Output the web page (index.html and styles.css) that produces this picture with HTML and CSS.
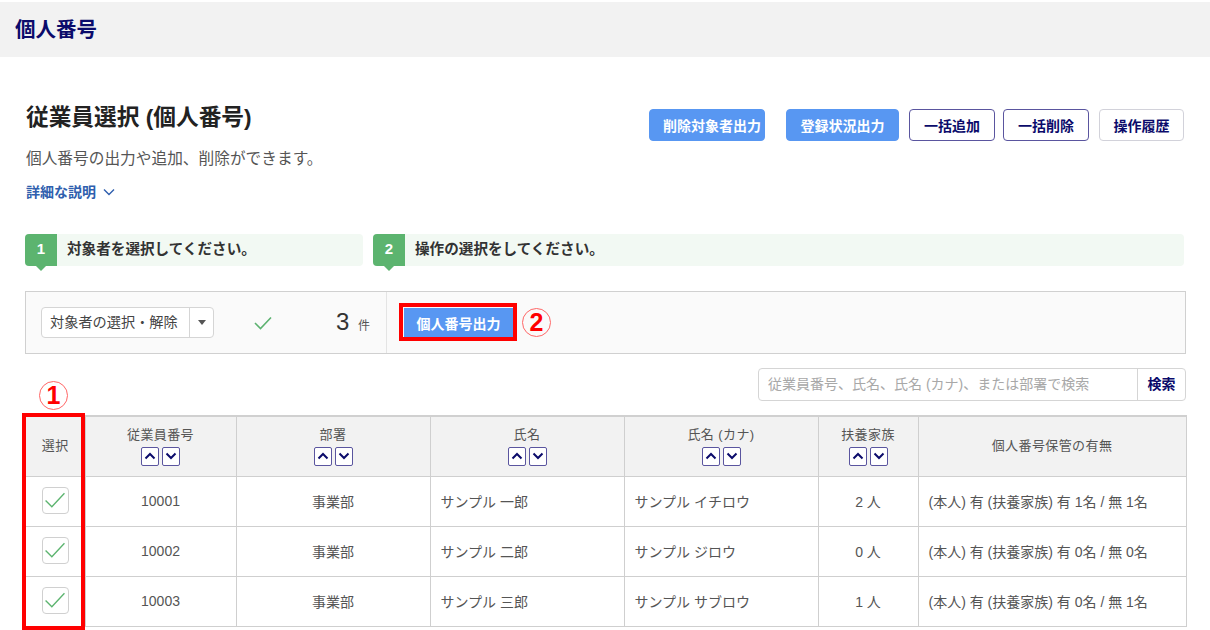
FILE: index.html
```html
<!DOCTYPE html>
<html lang="ja">
<head>
<meta charset="utf-8">
<title>個人番号</title>
<link rel="stylesheet" href="styles.css">
</head>
<body>
<header class="topbar"><span class="topbar-title">個人番号</span></header>
<main class="page">
  <section class="intro">
    <div class="intro-text">
      <h1 class="page-title">従業員選択 (個人番号)</h1>
      <p class="lead">個人番号の出力や追加、削除ができます。</p>
      <a class="details">詳細な説明
        <svg class="details-icon" viewBox="0 0 12 8"><path d="M1 1.5 6 6.5 11 1.5" fill="none" stroke="#2f5fae" stroke-width="1.4"/></svg>
      </a>
    </div>
    <div class="actions">
      <button class="btn btn-primary w116 shift">削除対象者出力</button>
      <button class="btn btn-primary w113 ml21">登録状況出力</button>
      <button class="btn btn-outline w86 ml10">一括追加</button>
      <button class="btn btn-outline w86 ml8">一括削除</button>
      <button class="btn btn-plain w85 ml10">操作履歴</button>
    </div>
  </section>

  <section class="steps">
    <div class="step step-one"><span class="step-num">1</span><span class="step-text">対象者を選択してください。</span></div>
    <div class="step step-two"><span class="step-num">2</span><span class="step-text">操作の選択をしてください。</span></div>
  </section>

  <section class="panel">
    <div class="panel-left">
      <div class="select">
        <span class="select-label">対象者の選択・解除</span>
        <span class="select-arrow"><i class="caret"></i></span>
      </div>
      <svg class="panel-check" viewBox="0 0 18 14"><path d="M1 7 6.5 12.5 17 1.5" fill="none" stroke="#5cb270" stroke-width="1.6"/></svg>
      <span class="count">3</span><span class="count-unit">件</span>
    </div>
    <div class="panel-right">
      <button class="btn btn-primary btn-output">個人番号出力</button>
      <span class="mark-box mark-box-button"></span>
      <span class="circled circled-two">2</span>
    </div>
  </section>

  <section class="search-row">
    <div class="search">
      <span class="search-input">従業員番号、氏名、氏名 (カナ)、または部署で検索</span>
      <span class="search-btn">検索</span>
    </div>
  </section>

  <section class="table-wrap">
    <span class="circled circled-one">1</span>
    <span class="mark-box mark-box-col"></span>
    <table class="grid">
      <colgroup>
        <col class="c-sel"><col class="c-no"><col class="c-dept"><col class="c-name"><col class="c-kana"><col class="c-dep"><col class="c-own">
      </colgroup>
      <thead>
        <tr>
          <th>選択</th>
          <th>従業員番号<div class="sort"><span class="sort-btn"><svg viewBox="0 0 12 8"><path d="M1.5 6.5 6 2 10.500 6.500" /></svg></span><span class="sort-btn"><svg viewBox="0 0 12 8"><path d="M1.500 1.500 6 6 10.500 1.500" /></svg></span></div></th>
          <th>部署<div class="sort"><span class="sort-btn"><svg viewBox="0 0 12 8"><path d="M1.5 6.5 6 2 10.500 6.500" /></svg></span><span class="sort-btn"><svg viewBox="0 0 12 8"><path d="M1.500 1.500 6 6 10.500 1.500" /></svg></span></div></th>
          <th>氏名<div class="sort"><span class="sort-btn"><svg viewBox="0 0 12 8"><path d="M1.5 6.5 6 2 10.500 6.500" /></svg></span><span class="sort-btn"><svg viewBox="0 0 12 8"><path d="M1.500 1.500 6 6 10.500 1.500" /></svg></span></div></th>
          <th>氏名 (カナ)<div class="sort"><span class="sort-btn"><svg viewBox="0 0 12 8"><path d="M1.5 6.5 6 2 10.500 6.500" /></svg></span><span class="sort-btn"><svg viewBox="0 0 12 8"><path d="M1.500 1.500 6 6 10.500 1.500" /></svg></span></div></th>
          <th>扶養家族<div class="sort"><span class="sort-btn"><svg viewBox="0 0 12 8"><path d="M1.5 6.5 6 2 10.500 6.500" /></svg></span><span class="sort-btn"><svg viewBox="0 0 12 8"><path d="M1.500 1.500 6 6 10.500 1.500" /></svg></span></div></th>
          <th>個人番号保管の有無</th>
        </tr>
      </thead>
      <tbody>
        <tr>
          <td class="center"><span class="checkbox"><svg viewBox="0 0 24 20"><path d="M1.500 10.500 8.500 17.500 22.500 2.500"/></svg></span></td>
          <td class="center">10001</td><td class="center">事業部</td><td>サンプル 一郎</td><td>サンプル イチロウ</td><td class="center">2 人</td><td>(本人) 有 (扶養家族) 有 1名 / 無 1名</td>
        </tr>
        <tr>
          <td class="center"><span class="checkbox"><svg viewBox="0 0 24 20"><path d="M1.500 10.500 8.500 17.500 22.500 2.500"/></svg></span></td>
          <td class="center">10002</td><td class="center">事業部</td><td>サンプル 二郎</td><td>サンプル ジロウ</td><td class="center">0 人</td><td>(本人) 有 (扶養家族) 有 0名 / 無 0名</td>
        </tr>
        <tr>
          <td class="center"><span class="checkbox"><svg viewBox="0 0 24 20"><path d="M1.500 10.500 8.500 17.500 22.500 2.500"/></svg></span></td>
          <td class="center">10003</td><td class="center">事業部</td><td>サンプル 三郎</td><td>サンプル サブロウ</td><td class="center">1 人</td><td>(本人) 有 (扶養家族) 有 0名 / 無 1名</td>
        </tr>
      </tbody>
    </table>
  </section>
</main>
</body>
</html>
```

FILE: styles.css
```css
* { box-sizing: border-box; }
html, body { height: 630px; overflow: hidden; }
body {
  margin: 0;
  padding-top: 2px;
  background: #fff;
  color: #333;
  font-family: "Liberation Sans", "Noto Sans CJK JP", sans-serif;
}
.topbar {
  height: 55px;
  background: #f2f2f2;
  padding-left: 15px;
  display: flex;
  align-items: center;
}
.topbar-title { font-size: 20.500px; font-weight: 700; color: #0b0b6b; margin-top: -4px; }
.page { padding: 0 24px 0 25px; }
.intro { display: flex; justify-content: space-between; height: 177px; padding-top: 45px; }
.intro-text { padding-left: 1px; }
.page-title { margin: 0; font-size: 22.700px; line-height: 30px; font-weight: 700; color: #222; }
.lead { margin: 17px 0 0; font-size: 15.700px; line-height: 20px; color: #555; }
.details { display: flex; align-items: center; margin-top: 13px; font-size: 14px; line-height: 20px; font-weight: 700; color: #2f5fae; }
.details-icon { width: 12px; height: 8px; margin-left: 7px; }
.actions { display: flex; align-items: flex-start; padding: 7px 2px 0 0; }
.btn {
  height: 32px;
  padding: 0;
  border-radius: 4px;
  font: 700 14px "Liberation Sans", "Noto Sans CJK JP", sans-serif;
}
.shift { padding-left: 10px; }
.btn-primary { background: #5897f2; border: 1px solid #5897f2; color: #fff; }
.btn-outline { background: #fff; border: 1px solid #5a559f; color: #0b0b6b; }
.btn-plain { background: #fff; border: 1px solid #d2d2da; color: #0b0b6b; }
.w116 { width: 116px; }
.w113 { width: 113px; }
.w86 { width: 86px; }
.w85 { width: 85px; }
.ml21 { margin-left: 21px; }
.ml10 { margin-left: 10px; }
.ml8 { margin-left: 8px; }
.steps { display: flex; gap: 10px; padding-right: 2px; height: 57px; }
.step {
  position: relative;
  height: 32px;
  display: flex;
  align-items: center;
  background: #f2f9f3;
  border-radius: 4px;
}
.step-one { width: 338px; }
.step-two { flex: 1; }
.step-num {
  position: relative;
  width: 32px;
  height: 32px;
  padding-bottom: 3px;
  background: #5cb46f;
  border-radius: 4px 0 0 4px;
  color: #fff;
  font-size: 15px;
  font-weight: 700;
  display: flex;
  align-items: center;
  justify-content: center;
}
.step-num::after {
  content: "";
  position: absolute;
  left: 11px;
  top: 32px;
  border: 5px solid transparent;
  border-top-color: #5cb46f;
  border-bottom: 0;
}
.step-text { margin: -6px 0 0 10px; font-size: 14.600px; font-weight: 700; color: #333; }
.panel {
  display: flex;
  height: 63px;
  background: #fafafa;
  border: 1px solid #d0d0d0;
}
.panel-left {
  width: 361px;
  display: flex;
  align-items: center;
  padding-left: 15px;
  border-right: 1px solid #e4e4e4;
}
.select {
  display: flex;
  width: 173px;
  height: 31px;
  background: #fff;
  border: 1px solid #d5d5d5;
  border-radius: 4px;
}
.select-label { width: 148px; padding-left: 8px; white-space: nowrap; font-size: 14.200px; line-height: 29px; color: #444; border-right: 1px solid #d5d5d5; }
.select-arrow { flex: 1; display: flex; align-items: center; justify-content: center; }
.caret { border: 4px solid transparent; border-top: 5px solid #555; border-bottom: 0; }
.panel-check { width: 18px; height: 14px; margin-left: 40px; }
.count { margin-left: 64px; font-size: 24px; color: #333; width: 14px; margin-top: -2px; }
.count-unit { margin: 4px 0 0 8px; font-size: 12px; color: #555; }
.panel-right { position: relative; flex: 1; display: flex; align-items: center; padding-left: 17px; }
.btn-output { width: 109px; height: 29px; border-radius: 0; }
.mark-box { position: absolute; border: 4px solid #f00; pointer-events: none; }
.mark-box-button { left: 12px; top: 11px; width: 118px; height: 38px; }
.circled {
  position: absolute;
  width: 29px;
  height: 29px;
  border: 1px solid #f66;
  border-radius: 50%;
  color: #f00;
  font-size: 25px;
  line-height: 27px;
  font-weight: 700;
  text-align: center;
}
.circled-two { left: 135px; top: 16px; }
.circled-one { left: 13px; top: -34px; z-index: 2; }
.search-row { display: flex; justify-content: flex-end; padding-top: 14px; height: 62px; }
.search {
  display: flex;
  width: 428px;
  height: 33px;
  background: #fff;
  border: 1px solid #d5d5d5;
  border-radius: 4px;
}
.search-input { flex: 1; padding-left: 9px; font-size: 14px; line-height: 31px; color: #a8a8a8; white-space: nowrap; }
.search-btn { width: 48px; border-left: 1px solid #d5d5d5; text-align: center; font-size: 14px; line-height: 31px; font-weight: 700; color: #0b0b6b; }
.table-wrap { position: relative; margin-left: 1px; }
.mark-box-col { left: -4px; top: -2px; width: 63px; height: 217px; z-index: 2; }
.grid { width: 1160px; table-layout: fixed; border-collapse: collapse; border: 1px solid #d0d0d0; border-top-width: 2px; border-left: 0; margin-top: -1px; }
.c-sel { width: 59px; }
.c-no { width: 151px; }
.c-dept { width: 194px; }
.c-name { width: 194px; }
.c-kana { width: 194px; }
.c-dep { width: 100px; }
.c-own { width: 268px; }
.grid th {
  height: 60px;
  padding: 0 0 3px;
  background: #f2f2f2;
  border: 1px solid #cfcfcf;
  border-top: 0;
  font-size: 13px;
  letter-spacing: 0.4px;
  font-weight: 400;
  color: #555;
  text-align: center;
  vertical-align: middle;
}
.grid td {
  height: 50px;
  padding: 0 10px;
  border: 1px solid #cfcfcf;
  font-size: 14px;
  color: #555;
  vertical-align: middle;
  white-space: nowrap;
}
.grid td.center { text-align: center; padding: 0; }
.grid td:first-child { padding: 0 0 2px; }
.grid td:first-child, .grid th:first-child { border-left: 0; }
.sort { display: flex; justify-content: center; gap: 3px; margin-top: 4px; }
.sort-btn {
  width: 18px;
  height: 19px;
  background: #fff;
  border: 1px solid #5a559f;
  border-radius: 2px;
  display: flex;
  align-items: center;
  justify-content: center;
}
.sort-btn svg { width: 12px; height: 8px; fill: none; stroke: #0b0b6b; stroke-width: 2; }
.checkbox {
  display: inline-flex;
  align-items: center;
  justify-content: center;
  width: 27px;
  height: 27px;
  background: #fff;
  border: 1px solid #d0d0d0;
  border-radius: 4px;
  vertical-align: middle;
}
.checkbox svg { width: 22px; height: 18px; fill: none; stroke: #5cb46f; stroke-width: 1.5; }
```
